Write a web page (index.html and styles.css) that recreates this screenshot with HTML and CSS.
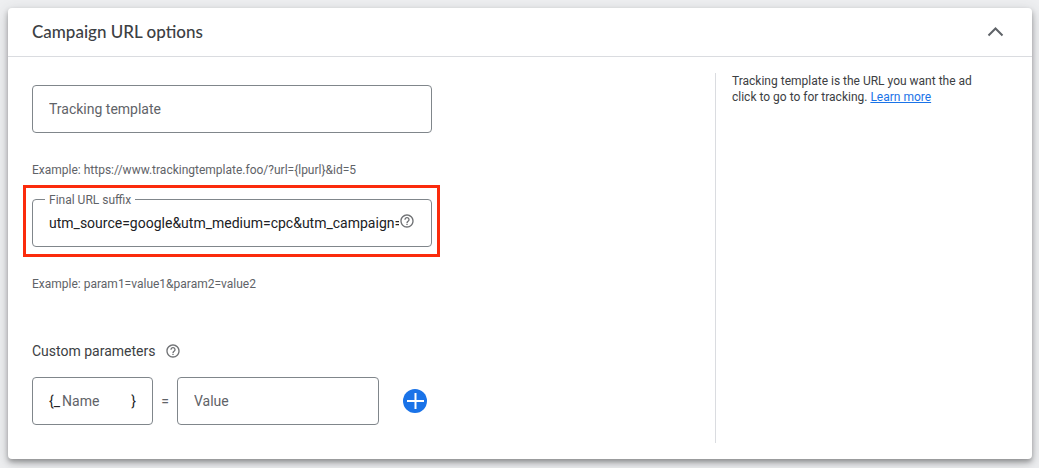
FILE: index.html
```html
<!DOCTYPE html>
<html lang="en">
<head>
<meta charset="utf-8">
<meta name="viewport" content="width=device-width, initial-scale=1">
<title>Campaign URL options</title>
<link rel="stylesheet" href="styles.css">
</head>
<body>
<section class="card">
  <header class="card-header">
    <h2 class="card-title">Campaign URL options</h2>
    <button class="icon-button" type="button" aria-label="Collapse" aria-expanded="true">
      <svg class="chevron" viewBox="0 0 24 24" aria-hidden="true"><path d="M4.500 15.500 11.500 8.500l7 7"/></svg>
    </button>
  </header>
  <div class="card-body">
    <form class="form">
      <div class="field">
        <input class="field-input" type="text" placeholder="Tracking template" aria-label="Tracking template">
      </div>
      <p class="hint">Example: https://www.trackingtemplate.foo/?url={lpurl}&amp;id=5</p>
      <div class="field field-suffix">
        <label class="field-label" for="suffix">Final URL suffix</label>
        <input class="field-input" id="suffix" type="text" value="utm_source=google&amp;utm_medium=cpc&amp;utm_campaign=spring_sale">
        <button class="icon-button field-help" type="button" aria-label="Help: final URL suffix">
          <svg class="help" viewBox="0 0 24 24" aria-hidden="true"><path d="M11 18h2v-2h-2v2zm1-16C6.480 2 2 6.480 2 12s4.480 10 10 10 10-4.480 10-10S17.520 2 12 2zm0 18c-4.410 0-8-3.590-8-8s3.590-8 8-8 8 3.590 8 8-3.590 8-8 8zm0-14c-2.210 0-4 1.790-4 4h2c0-1.100.9-2 2-2s2 .9 2 2c0 2-3 1.750-3 5h2c0-2.250 3-2.500 3-5 0-2.210-1.790-4-4-4z"/></svg>
        </button>
        <div class="highlight"></div>
      </div>
      <p class="hint">Example: param1=value1&amp;param2=value2</p>
      <div class="params-heading">
        <h3 class="params-title">Custom parameters</h3>
        <button class="icon-button" type="button" aria-label="Help: custom parameters">
          <svg class="help" viewBox="0 0 24 24" aria-hidden="true"><path d="M11 18h2v-2h-2v2zm1-16C6.480 2 2 6.480 2 12s4.480 10 10 10 10-4.480 10-10S17.520 2 12 2zm0 18c-4.410 0-8-3.590-8-8s3.590-8 8-8 8 3.590 8 8-3.590 8-8 8zm0-14c-2.210 0-4 1.790-4 4h2c0-1.100.9-2 2-2s2 .9 2 2c0 2-3 1.750-3 5h2c0-2.250 3-2.500 3-5 0-2.210-1.790-4-4-4z"/></svg>
        </button>
      </div>
      <div class="params-row">
        <div class="field field-name">
          <span class="affix">{_</span>
          <input class="field-input" type="text" placeholder="Name" aria-label="Parameter name">
          <span class="affix">}</span>
        </div>
        <span class="equals">=</span>
        <div class="field field-param">
          <input class="field-input" type="text" placeholder="Value" aria-label="Parameter value">
        </div>
        <button class="icon-button add-button" type="button" aria-label="Add parameter">
          <svg class="plus" viewBox="0 0 24 24" aria-hidden="true"><circle cx="12" cy="12" r="12"/><path d="M4 12h17M12.500 4v16"/></svg>
        </button>
      </div>
    </form>
    <aside class="info">Tracking template is the URL you want the ad click to go to for tracking. <a class="link" href="#">Learn more</a></aside>
  </div>
</section>
</body>
</html>
```
FILE: styles.css
```css
* {
  box-sizing: border-box;
}

body {
  margin: 0;
  padding: 8px 7px 9px 8px;
  background: #eeeff1;
  font-family: Roboto, "Liberation Sans", sans-serif;
  font-size: 14px;
  line-height: 20px;
  color: #3c4043;
}

.card {
  background: #fff;
  border-radius: 4px;
  box-shadow: 0 3px 5px rgba(0, 0, 0, 0.3), 0 4px 14px rgba(60, 64, 67, 0.25);
}

.card-header {
  display: flex;
  align-items: center;
  justify-content: space-between;
  height: 49px;
  padding: 0 24px;
  border-bottom: 1px solid #dadce0;
}

.card-title {
  margin: 0;
  font-family: Lato, Roboto, sans-serif;
  font-size: 17px;
  font-weight: 500;
  line-height: 24px;
}

.icon-button {
  display: flex;
  flex: none;
  padding: 0;
  border: 0;
  background: none;
  cursor: pointer;
}

.chevron {
  width: 24px;
  height: 24px;
  fill: none;
  stroke: #5f6368;
  stroke-width: 2;
}

.help {
  width: 16px;
  height: 16px;
  fill: #6f7174;
}

.plus {
  width: 24px;
  height: 24px;
  fill: #1a73e8;
  stroke: none;
}

.plus path {
  stroke: #fff;
  stroke-width: 2;
}

.card-body {
  display: flex;
  padding: 16px 0;
}

.form {
  flex: 1;
  padding: 12px 24px 18px;
}

.field {
  position: relative;
  display: flex;
  align-items: center;
  width: 400px;
  max-width: 100%;
  height: 48px;
  padding: 0 16px;
  border: 1px solid #80868b;
  border-radius: 4px;
}

.field-input {
  flex: 1;
  width: 0;
  min-width: 0;
  padding: 0;
  border: 0;
  outline: 0;
  background: none;
  font: inherit;
  color: #202124;
}

.field-input::placeholder {
  color: #5f6368;
  opacity: 1;
}

.field-label {
  position: absolute;
  top: -8px;
  left: 12px;
  padding: 0 4px;
  background: #fff;
  font-size: 12px;
  line-height: 16px;
  color: #5f6368;
}

.field-suffix {
  margin-top: 21px;
}

.field-help {
  margin-bottom: 4px;
}

.highlight {
  position: absolute;
  inset: -15px -9px -11px -10px;
  border: 3px solid #fb2b0c;
  pointer-events: none;
}

.hint {
  margin: 29px 0 0;
  font-size: 12px;
  line-height: 16px;
  color: #5f6368;
}

.params-heading {
  display: flex;
  align-items: center;
  gap: 10px;
  margin: 49px 0 16px;
}

.params-title {
  margin: 0;
  font-size: 14px;
  font-weight: 400;
}

.params-row {
  display: flex;
  align-items: center;
  gap: 8px;
}

.field-name {
  width: 121px;
  gap: 2px;
}

.field-param {
  width: 202px;
}

.affix {
  color: #202124;
}

.equals {
  width: 8px;
  text-align: center;
  color: #5f6368;
}

.add-button {
  margin-left: 16px;
}

.info {
  flex: none;
  width: 317px;
  padding: 0 40px 0 16px;
  border-left: 1px solid #dadce0;
  font-size: 12px;
  line-height: 16px;
}

.link {
  color: #1a73e8;
}
```
